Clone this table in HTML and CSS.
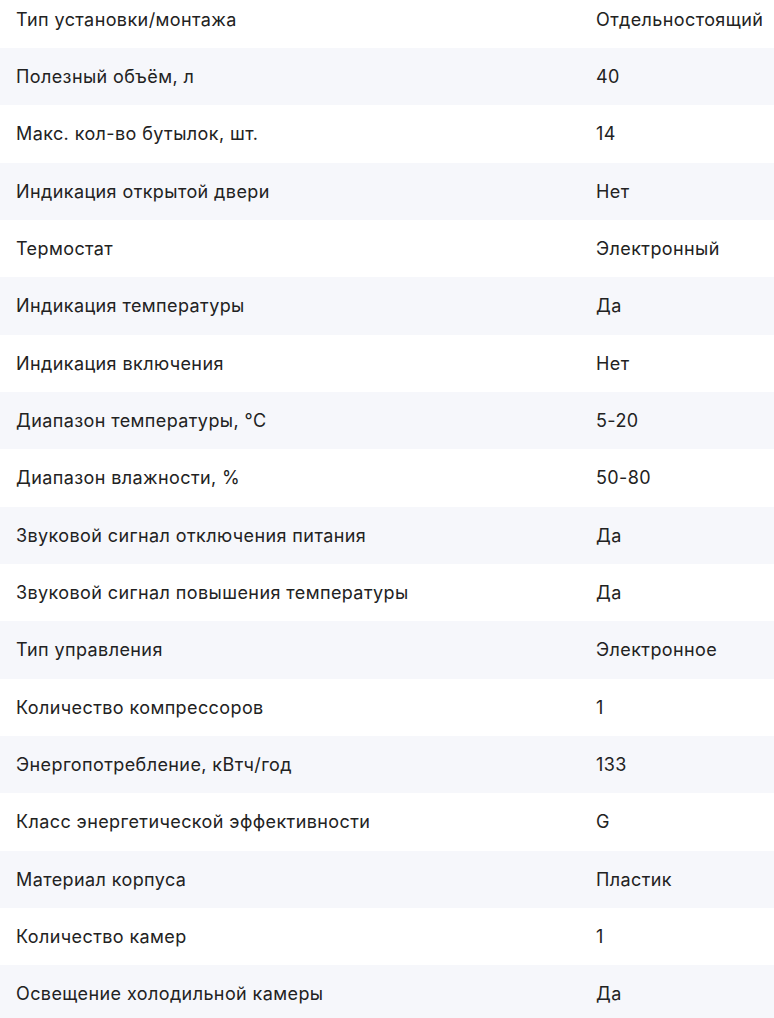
FILE: index.html
```html
<!DOCTYPE html>
<html lang="ru">
<head>
<meta charset="utf-8">
<link rel="stylesheet" href="styles.css">
</head>
<body>
<div class="specs">
  <div class="row"><div class="label">Тип установки/монтажа</div><div class="value">Отдельностоящий</div></div>
  <div class="row"><div class="label">Полезный объём, л</div><div class="value">40</div></div>
  <div class="row"><div class="label">Макс. кол-во бутылок, шт.</div><div class="value">14</div></div>
  <div class="row"><div class="label">Индикация открытой двери</div><div class="value">Нет</div></div>
  <div class="row"><div class="label">Термостат</div><div class="value">Электронный</div></div>
  <div class="row"><div class="label">Индикация температуры</div><div class="value">Да</div></div>
  <div class="row"><div class="label">Индикация включения</div><div class="value">Нет</div></div>
  <div class="row"><div class="label">Диапазон температуры, °C</div><div class="value">5-20</div></div>
  <div class="row"><div class="label">Диапазон влажности, %</div><div class="value">50-80</div></div>
  <div class="row"><div class="label">Звуковой сигнал отключения питания</div><div class="value">Да</div></div>
  <div class="row"><div class="label">Звуковой сигнал повышения температуры</div><div class="value">Да</div></div>
  <div class="row"><div class="label">Тип управления</div><div class="value">Электронное</div></div>
  <div class="row"><div class="label">Количество компрессоров</div><div class="value">1</div></div>
  <div class="row"><div class="label">Энергопотребление, кВтч/год</div><div class="value">133</div></div>
  <div class="row"><div class="label">Класс энергетической эффективности</div><div class="value">G</div></div>
  <div class="row"><div class="label">Материал корпуса</div><div class="value">Пластик</div></div>
  <div class="row"><div class="label">Количество камер</div><div class="value">1</div></div>
  <div class="row"><div class="label">Освещение холодильной камеры</div><div class="value">Да</div></div>
</div>
</body>
</html>
```
FILE: styles.css
```css
html, body {
  margin: 0;
  padding: 0;
  background: #ffffff;
}
body {
  font-family: Inter, "Noto Sans", sans-serif;
  font-size: 18px;
  letter-spacing: 0.4px;
  color: #222222;
  overflow: hidden;
}
.specs {
  margin-top: -9.33px;
}
.row {
  display: grid;
  grid-template-columns: 1fr 178px;
  padding: 18px 0;
  line-height: 21.33px;
}
.row:nth-child(even) {
  background: #f6f7fb;
}
.label {
  padding-left: 16px;
}
.value {
  white-space: nowrap;
}
```
